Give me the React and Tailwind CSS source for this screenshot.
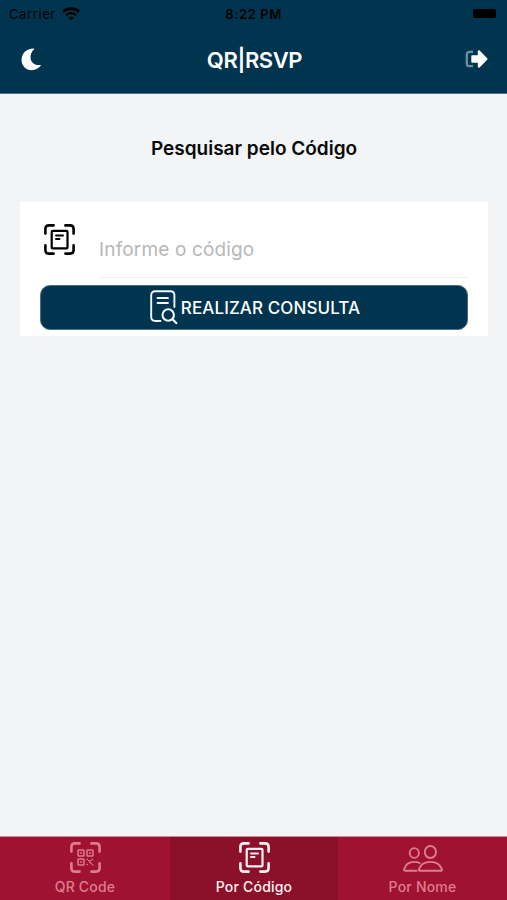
function MoonIcon() {
	return (
		<svg width="21" height="23" viewBox="0 0 22 24" fill="#fff">
			<path d="M13 0.600C5.600 0.600 0.600 6 0.600 12.400C0.600 18.600 5.200 23.200 11.200 23.200C15 23.200 18.200 21.400 20.700 18.600C21.100 18 20.500 17.600 19.700 17.700C14 18.400 10 14.800 10 9.600C10 6.400 11.200 3.600 13.600 1.600C14 1.100 13.700 0.600 13 0.600Z" />
		</svg>
	);
}

function WifiIcon() {
	return (
		<svg width="18" height="14" viewBox="0 0 18 14" fill="none" stroke="#000">
			<path d="M1 4.700C5.600 0.600 12.400 0.600 17 4.700" strokeWidth="2.600" />
			<path d="M4 8.200C7 5.700 11 5.700 14 8.200" strokeWidth="2.300" />
			<path d="M9 13.500L6.200 10.700C7.800 9.500 10.200 9.500 11.800 10.700Z" fill="#000" stroke="none" />
		</svg>
	);
}

function LogoutIcon() {
	return (
		<svg width="23" height="18" viewBox="0 0 23 18" fill="none">
			<path
				d="M8 1.800H4.500C2.800 1.800 1.800 2.800 1.800 4.500V13.500C1.800 15.200 2.800 16.200 4.500 16.200H8"
				stroke="#6f8d9d"
				strokeWidth="2.300"
			/>
			<path
				d="M7.300 5.300H12.800V1.400C12.800 0.500 13.900 0 14.600 0.600L22.200 8.200C22.700 8.700 22.700 9.300 22.200 9.800L14.600 17.400C13.900 18 12.800 17.500 12.800 16.600V12.700H7.300C6.700 12.700 6.300 12.300 6.300 11.700V6.300C6.300 5.700 6.700 5.300 7.300 5.300Z"
				fill="#fff"
			/>
		</svg>
	);
}

function ScanFrame({ children }) {
	return (
		<svg
			width="31"
			height="31"
			viewBox="0 0 31 31"
			fill="none"
			stroke="currentColor"
			strokeLinecap="round"
			strokeLinejoin="round"
		>
			<path
				d="M1.400 9.600V5C1.400 2.500 2.500 1.400 5 1.400H9.600M21.400 1.400H26C28.500 1.400 29.600 2.500 29.600 5V9.600M29.600 21.400V26C29.600 28.500 28.500 29.600 26 29.600H21.400M9.600 29.600H5C2.500 29.600 1.400 28.500 1.400 26V21.400"
				strokeWidth="2.600"
			/>
			{children}
		</svg>
	);
}

function ScanDocIcon() {
	return (
		<ScanFrame>
			<rect x="7.700" y="6.800" width="15.800" height="17.600" rx="1.200" strokeWidth="2.200" />
			<path d="M12 11.500H19M12 15H15.500" strokeWidth="1.900" />
		</ScanFrame>
	);
}

function ScanQrIcon() {
	return (
		<ScanFrame>
			<rect x="8" y="8" width="6" height="6" rx="0.800" strokeWidth="1.500" />
			<rect x="17" y="8" width="6" height="6" rx="0.800" strokeWidth="1.500" />
			<rect x="8" y="17" width="6" height="6" rx="0.800" strokeWidth="1.500" />
			<path
				d="M10.500 11H11.500M19.500 11H20.500M10.500 20H11.500M17.200 17.200H17.400M22.400 17.200H22.600M18.600 18.800H19M20.800 18.600H21M19.600 20.300H20M17.200 22.600H17.400M21 21.400H21.200M22.600 22.800H22.700"
				strokeWidth="1.500"
			/>
		</ScanFrame>
	);
}

function SearchDocIcon() {
	return (
		<svg
			width="28"
			height="35"
			viewBox="0 0 28 35"
			fill="none"
			stroke="#f3f8fa"
			strokeLinecap="round"
			strokeLinejoin="round"
		>
			<path
				d="M24.400 17V5.200C24.400 2.700 23 1.300 20.500 1.300H5.100C2.600 1.300 1.200 2.700 1.200 5.200V26.800C1.200 29.600 2.600 31 5.100 31H10.500"
				strokeWidth="1.900"
			/>
			<path d="M7.500 8H18M7.500 13H18" strokeWidth="1.800" />
			<circle cx="18.200" cy="25" r="5.700" strokeWidth="2.100" />
			<path d="M22.400 29.200L26.300 33" strokeWidth="2.300" />
		</svg>
	);
}

function PeopleIcon() {
	return (
		<svg
			className="mt-0.5"
			width="40"
			height="27"
			viewBox="0 0 40 27"
			fill="none"
			stroke="currentColor"
			strokeWidth="1.900"
			strokeLinecap="round"
			strokeLinejoin="round"
		>
			<ellipse cx="11.300" cy="8" rx="4.600" ry="4.900" />
			<ellipse cx="27.400" cy="7" rx="5.600" ry="6" />
			<path d="M13.500 25.800H2.500C1.400 25.800 0.900 25.200 1.100 24.200C2.500 19.300 6.500 16.900 11.300 16.900C13.500 16.900 15.100 17.200 16.600 18" />
			<path d="M17.300 25.800H37.500C38.700 25.800 39.200 25.100 38.900 24.100C37.300 19.500 33.300 16.900 27.400 16.900C21.500 16.900 17.500 19.500 15.900 24.100C15.600 25.100 16.100 25.800 17.300 25.800Z" />
		</svg>
	);
}

function Tab({ icon, label, active }) {
	return (
		<button
			className={
				"flex flex-col items-center pt-1 " +
				(active ? "bg-[#8b112b] text-[#fff1f3]" : "bg-[#9f1232] text-[#de7d8f]")
			}
		>
			<span className="flex h-8 items-center">{icon}</span>
			<span className="mt-1 text-[14px] leading-5 font-medium tracking-[0.2px] whitespace-nowrap">
				{label}
			</span>
		</button>
	);
}

export default function App() {
	return (
		<div className="flex h-screen w-full flex-col overflow-hidden bg-[#f2f4f6] font-['Inter','Liberation_Sans',sans-serif]">
			<header className="h-[94px] shrink-0 border-b border-[#52788a] bg-[#00344f]">
				<div className="grid h-7 grid-cols-3 items-center pr-[11px] pl-[9px] text-[13px] text-black">
					<div className="flex items-center gap-1.5">
						<span className="pt-0.5 tracking-[0.6px]">Carrier</span>
						<WifiIcon />
					</div>
					<span className="pt-0.5 pl-0.5 text-center font-semibold tracking-[0.6px] whitespace-nowrap">
						8:22 PM
					</span>
					<div className="mb-0.5 h-[9px] w-[23px] justify-self-end rounded-[2px] bg-black" />
				</div>
				<div className="grid h-[62px] grid-cols-3 items-center pr-[19px] pl-[21px]">
					<MoonIcon />
					<h1 className="pt-0.5 text-center text-[22px] font-semibold tracking-[-0.4px] text-white">
						QR|RSVP
					</h1>
					<div className="justify-self-end">
						<LogoutIcon />
					</div>
				</div>
			</header>
			<main className="flex-1 pt-[41px] pr-[19px] pl-5">
				<h2 className="text-center text-[19px] leading-7 font-semibold text-[#090909]">
					Pesquisar pelo Código
				</h2>
				<section className="mt-[39px] h-[134px] bg-white px-5">
					<div className="flex h-[76px]">
						<div className="ml-1 w-[55px] shrink-0 pt-[22px] text-black">
							<ScanDocIcon />
						</div>
						<input
							className="min-w-0 flex-1 border-b border-[#eeeff0] pt-[21px] text-[19px] tracking-[0.15px] text-black outline-none placeholder:text-[#b7b7b7]"
							placeholder="Informe o código"
						/>
					</div>
					<button className="mt-[7px] flex h-[45px] w-full items-center justify-center gap-[3px] rounded-[10px] border border-[#496f83] bg-[#00344f] pl-0.5 text-[17px] font-medium text-white">
						<SearchDocIcon />
						<span className="pt-0.5 tracking-[0.1px]">REALIZAR CONSULTA</span>
					</button>
				</section>
			</main>
			<nav className="grid h-16 shrink-0 grid-cols-[170px_168px_1fr] border-t border-[#cf8b99]">
				<Tab icon={<ScanQrIcon />} label="QR Code" />
				<Tab icon={<ScanDocIcon />} label="Por Código" active />
				<Tab icon={<PeopleIcon />} label="Por Nome" />
			</nav>
		</div>
	);
}
